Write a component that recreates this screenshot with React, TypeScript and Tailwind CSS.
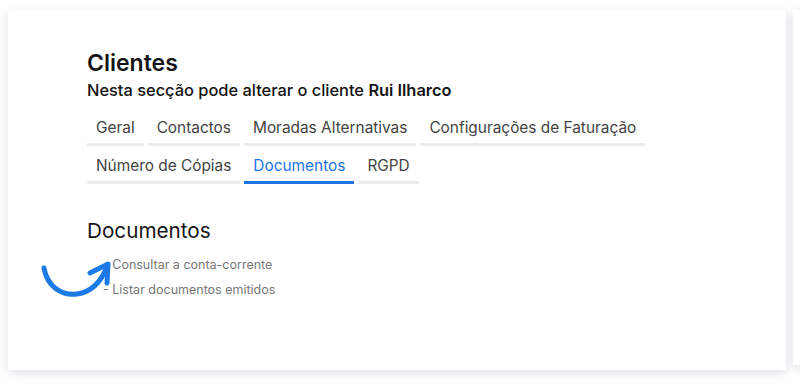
import React from 'react';

const tabsRow1 = ['Geral', 'Contactos', 'Moradas Alternativas', 'Configurações de Faturação'];
const tabsRow2 = ['Número de Cópias', 'Documentos', 'RGPD'];

function Tab({ label, active }: { label: string; active?: boolean }) {
  return (
    <div
      className={
        'mr-1 px-[9px] pt-[11px] pb-[7px] border-b-[3px] text-[15.4px] leading-[17px] ' +
        (active ? 'border-[#1a73e8] text-[#1a73e8]' : 'border-[#ececec] text-[#444]')
      }
    >
      {label}
    </div>
  );
}

function CurvedArrow() {
  return (
    <svg width="85" height="55" viewBox="0 0 85 55" className="absolute left-[-68px] top-[-2px]" fill="none">
      <path d="M9 18 C12 36 26 46 42 44 C56 42 66 32 72 17" stroke="#1c7ae6" strokeWidth="5" strokeLinecap="round" />
      <path d="M55 23 L73 14 L72 33" stroke="#1c7ae6" strokeWidth="5" strokeLinecap="round" strokeLinejoin="round" />
    </svg>
  );
}

export default function App() {
  return (
    <div className="w-[800px] h-[385px] bg-white overflow-hidden flex gap-[7px] pt-[9px] pl-[8px]" style={{ fontFamily: 'Inter, "Open Sans", sans-serif' }}>
      <div className="w-[778px] h-[361px] shrink-0 bg-white shadow-[0_3px_10px_rgba(40,50,90,0.14)] pl-[79px] pt-[38px]">
        <h1 className="text-[23px] leading-[32px] font-semibold text-[#141414]">Clientes</h1>
        <p className="text-[16.4px] leading-[22px] font-medium text-[#141414]">
          Nesta secção pode alterar o cliente <span className="font-semibold">Rui Ilharco</span>
        </p>

        <div className="mt-[7px] flex flex-wrap w-[620px]">
          {tabsRow1.map((t) => (
            <Tab key={t} label={t} />
          ))}
        </div>
        <div className="flex">
          {tabsRow2.map((t) => (
            <Tab key={t} label={t} active={t === 'Documentos'} />
          ))}
        </div>

        <h2 className="mt-[33px] text-[20.7px] leading-[28px] text-[#161616]">Documentos</h2>
        <ul className="mt-[7px] text-[12.5px] leading-[25px] text-[#777] pl-[16px]">
          <li className="relative">
            <CurvedArrow />- Consultar a conta-corrente
          </li>
          <li>- Listar documentos emitidos</li>
        </ul>
      </div>
      <div className="w-[100px] h-[356px] shrink-0 bg-white shadow-[0_3px_10px_rgba(40,50,90,0.14)]" />
    </div>
  );
}
